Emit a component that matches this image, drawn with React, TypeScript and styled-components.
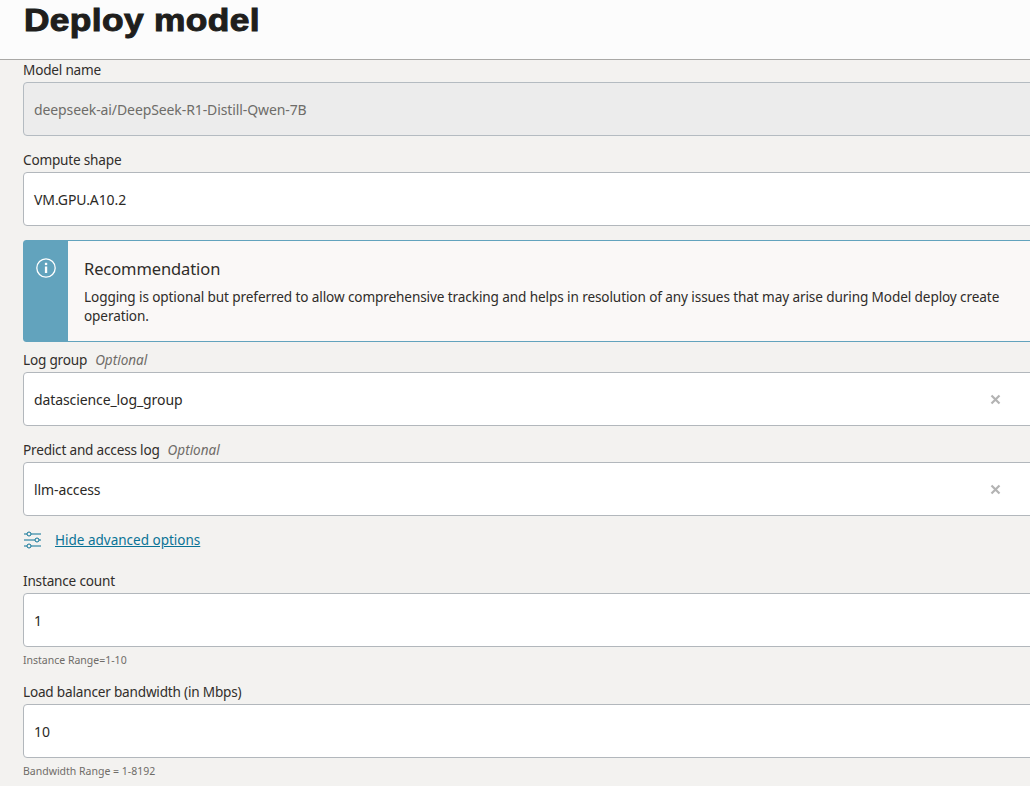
import React from 'react';
import styled, { createGlobalStyle } from 'styled-components';

const GlobalStyle = createGlobalStyle`
html, body {
  margin: 0;
  padding: 0;
  height: 100%;
  overflow: hidden;
  background-color: #f3f2f0;
}
`;

const Page = styled.div`
width: 1030px;
height: 786px;
overflow: hidden;
font-family: "Noto Sans", "Liberation Sans", sans-serif;
font-size: 13.5px;
color: #2b2926;`;

const Header = styled.header`
box-sizing: border-box;
height: 60px;
padding: 0 0 0 24px;
background-color: #fcfcfc;
border-bottom: 1px solid #a9a8a6;`;

const Title = styled.h1`
margin: 0;
font-family: "Liberation Sans", Arial, sans-serif;
font-size: 31px;
line-height: 41px;
font-weight: bold;
letter-spacing: 0.3px;
color: #201e1c;
-webkit-text-stroke: 1px #201e1c;
transform: scaleX(1.14);
transform-origin: left center;`;

const Form = styled.div`
display: flex;
flex-direction: column;
width: 1050px;
padding-left: 23px;`;

const Field = styled.div<{ $top: number }>`
display: flex;
flex-direction: column;
margin-top: ${(p) => p.$top}px;`;

const Label = styled.label`
display: block;
height: 22px;
font-size: 13.6px;
letter-spacing: -0.2px;
line-height: 19px;
color: #312e2b;`;

const Optional = styled.span`
margin-left: 8px;
font-size: 13.5px;
letter-spacing: 0;
font-style: italic;
color: #6f6c68;`;

const Input = styled.div<{ $disabled?: boolean }>`
box-sizing: border-box;
display: flex;
align-items: center;
justify-content: space-between;
height: 54px;
padding: 1px 64px 0 10px;
border: 1px solid ${(p) => (p.$disabled ? '#b4bbc1' : '#b2b7bc')};
border-radius: 4px;
font-size: 14px;
letter-spacing: -0.1px;
background-color: ${(p) => (p.$disabled ? '#ececec' : '#ffffff')};
color: ${(p) => (p.$disabled ? '#6e6c69' : '#2b2926')};`;

const Clear = styled.svg`
width: 11px;
height: 11px;
margin: -1px 7px 0 0;
color: #b3b3b3;`;

const Hint = styled.div`
height: 14px;
margin-top: 6px;
font-size: 10.5px;
line-height: 14px;
color: #6f6c68;`;

const Banner = styled.div`
box-sizing: border-box;
display: flex;
height: 102px;
margin-top: 14px;
border: 1px solid #62a3bd;
border-radius: 3px;
background-color: #faf8f7;`;

const BannerSide = styled.div`
flex: 0 0 44px;
display: flex;
justify-content: center;
padding-top: 17px;
background-color: #62a3bd;`;

const BannerBody = styled.div`
flex: 1;
padding: 16px 20px 0 16px;`;

const BannerTitle = styled.div`
font-size: 16.5px;
letter-spacing: -0.1px;
line-height: 24px;
color: #2f2c29;`;

const BannerText = styled.p`
width: 930px;
margin: 6px 0 0;
font-size: 13.6px;
letter-spacing: -0.11px;
line-height: 19px;
color: #2f2c29;`;

const LinkRow = styled.div`
display: flex;
align-items: center;
gap: 14px;
height: 20px;
margin-top: 14px;
padding-left: 1px;`;

const AdvancedLink = styled.a`
color: #0a7396;
text-decoration: underline;`;

const CloseIcon = () => (
  <Clear viewBox="0 0 11 11">
    <path d="M1.5 1.5l8 8M9.5 1.5l-8 8" stroke="currentColor" strokeWidth="2.2" fill="none" />
  </Clear>
);

const InfoIcon = () => (
  <svg width="20" height="20" viewBox="0 0 20 20">
    <circle cx="10" cy="10" r="9.2" stroke="#fff" strokeWidth="1.3" fill="none" />
    <rect x="8.9" y="8.5" width="2.3" height="6.5" fill="#fff" />
    <rect x="8.9" y="4.8" width="2.3" height="2.3" fill="#fff" />
  </svg>
);

const SlidersIcon = () => (
  <svg width="17" height="18" viewBox="0 0 17 18" fill="none" stroke="#0a7396" strokeWidth="1">
    <path d="M0 3h3M7 3h10M0 9h11M15 9h2M0 15h3M7 15h10" />
    <circle cx="5" cy="3" r="2" />
    <circle cx="13" cy="9" r="2" />
    <circle cx="5" cy="15" r="2" />
  </svg>
);

const App = () => (
  <Page>
    <GlobalStyle />
    <Header>
      <Title>Deploy model</Title>
    </Header>
    <Form>
      <Field $top={0}>
        <Label>Model name</Label>
        <Input $disabled>deepseek-ai/DeepSeek-R1-Distill-Qwen-7B</Input>
      </Field>
      <Field $top={14}>
        <Label>Compute shape</Label>
        <Input>VM.GPU.A10.2</Input>
      </Field>
      <Banner>
        <BannerSide>
          <InfoIcon />
        </BannerSide>
        <BannerBody>
          <BannerTitle>Recommendation</BannerTitle>
          <BannerText>
            Logging is optional but preferred to allow comprehensive tracking and helps in resolution of any issues that may arise during Model deploy create operation.
          </BannerText>
        </BannerBody>
      </Banner>
      <Field $top={8}>
        <Label>Log group<Optional>Optional</Optional></Label>
        <Input>datascience_log_group<CloseIcon /></Input>
      </Field>
      <Field $top={14}>
        <Label>Predict and access log<Optional>Optional</Optional></Label>
        <Input>llm-access<CloseIcon /></Input>
      </Field>
      <LinkRow>
        <SlidersIcon />
        <AdvancedLink href="#">Hide advanced options</AdvancedLink>
      </LinkRow>
      <Field $top={21}>
        <Label>Instance count</Label>
        <Input>1</Input>
        <Hint>Instance Range=1-10</Hint>
      </Field>
      <Field $top={15}>
        <Label>Load balancer bandwidth (in Mbps)</Label>
        <Input>10</Input>
        <Hint>Bandwidth Range = 1-8192</Hint>
      </Field>
    </Form>
  </Page>
);

export default App;
